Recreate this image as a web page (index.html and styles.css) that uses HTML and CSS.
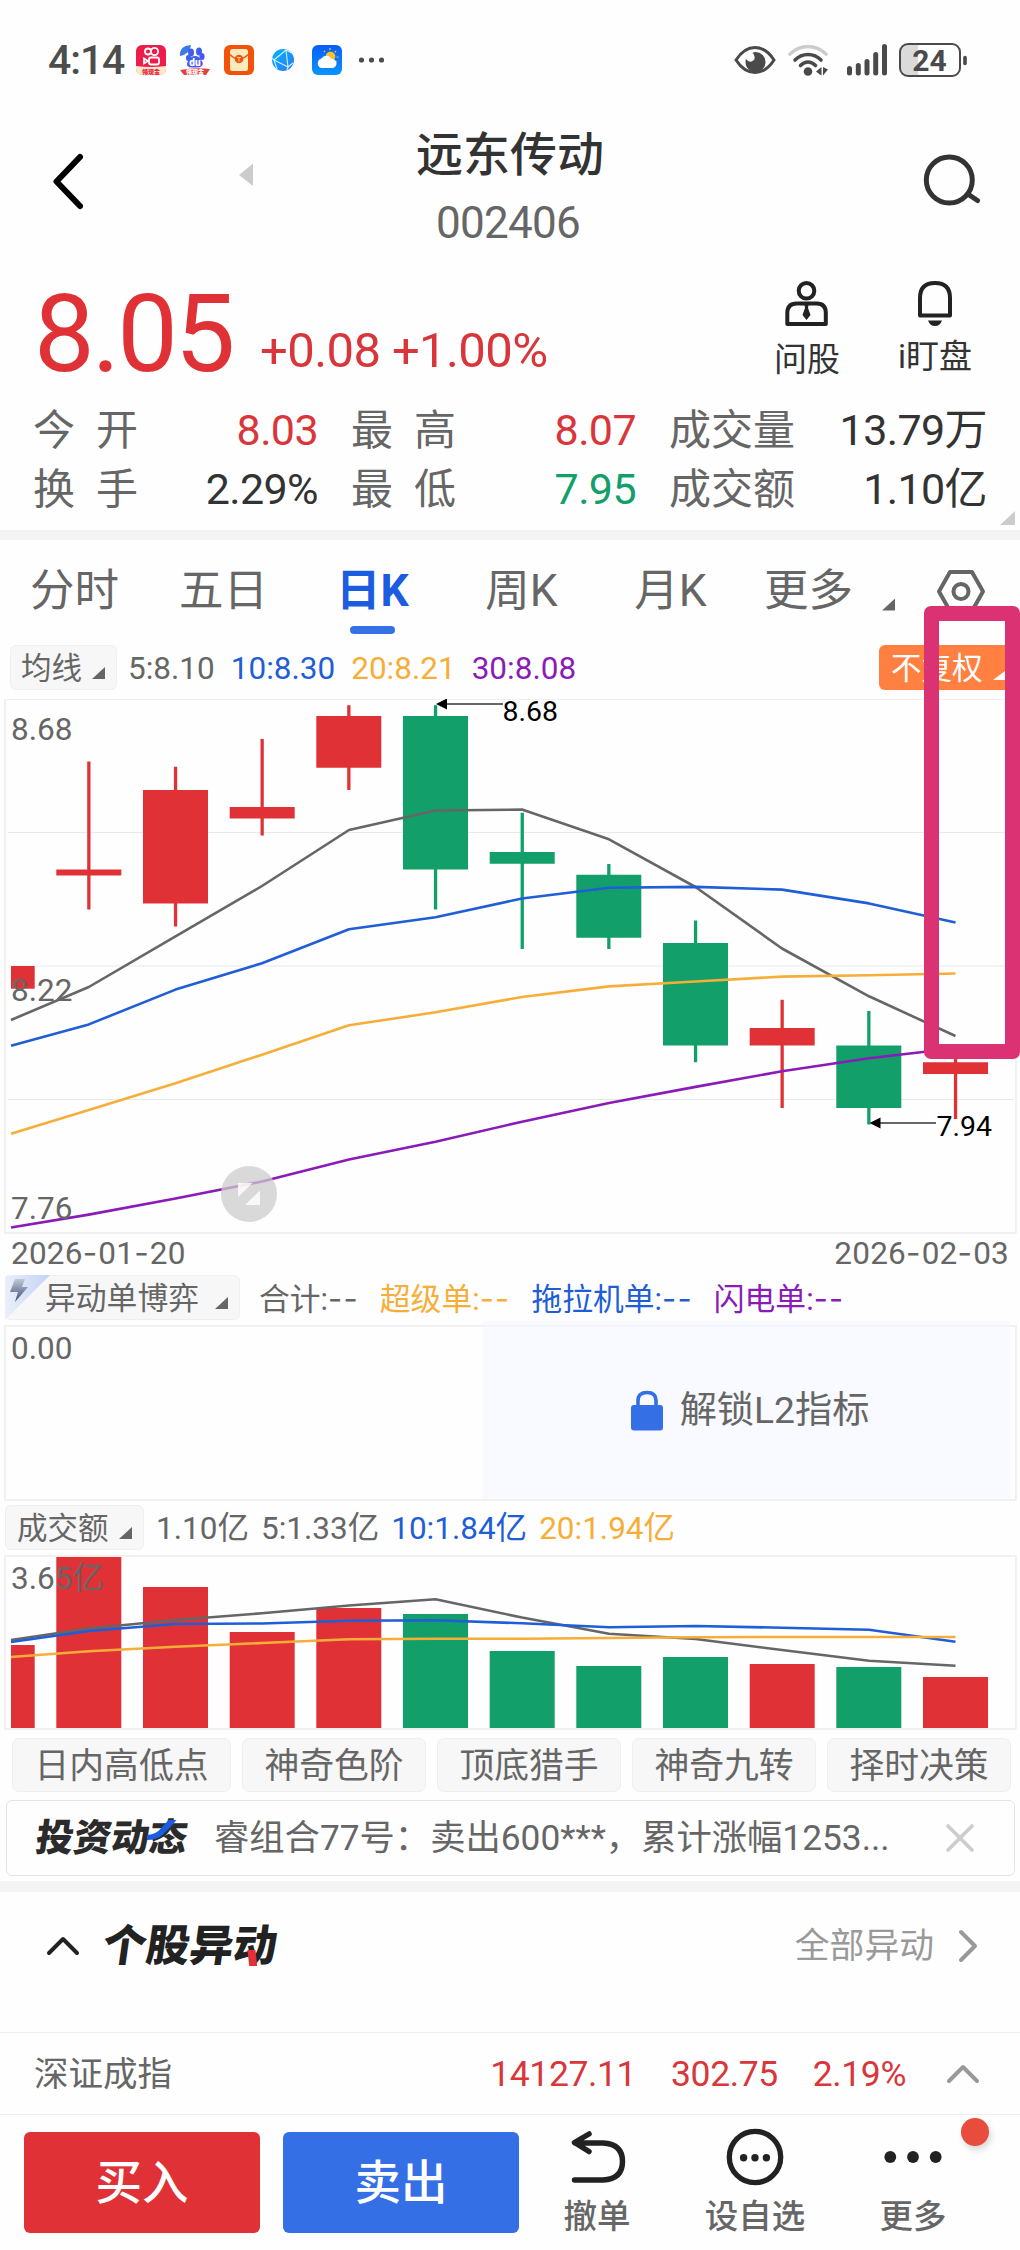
FILE: index.html
```
<!DOCTYPE html>
<html lang="zh-CN">
  <head>
    <meta charset="utf-8">
    <title>远东传动 002406</title>
    <link rel="stylesheet" href="styles.css">
  </head>
  <body>
    <div class="status">
      <span class="clock">4:14</span>
      <svg class="apps" width="260" height="34" viewBox="130 43 260 34">
        <defs>
          <linearGradient id="sky" x1="0" y1="0" x2="0" y2="1"><stop offset="0" stop-color="#0a5df5"/><stop offset="1" stop-color="#0a95ff"/></linearGradient>
          <linearGradient id="globe" x1="0" y1="0" x2="1" y2="1"><stop offset="0" stop-color="#00b4fa"/><stop offset="1" stop-color="#2f7af5"/></linearGradient>
          <linearGradient id="paw" x1="0" y1="0" x2="1" y2="1"><stop offset="0" stop-color="#2a6cf0"/><stop offset="1" stop-color="#5a4bf0"/></linearGradient>
        </defs>
        <!-- video app -->
        <rect x="136" y="45" width="30" height="30" rx="6" fill="#ee1c4b"/>
        <path d="M136 66q15 2 30 0v3q0 6-6 6h-18q-6 0-6-6z" fill="#fde9c8"/>
        <g fill="none" stroke="#fff" stroke-width="1.8"><circle cx="148" cy="51.5" r="3"/><circle cx="154.500" cy="51.500" r="3.600"/><rect x="149" y="57.500" width="10" height="7" rx="2"/><path d="M144 58.500l4 2.500-4 2.500z"/></g>
        <text x="151" y="74" class="app-tag" fill="#e8203c">领现金</text>
        <!-- search app -->
        <path d="M180 56q-1-10 11-11q-1 9-11 11z" fill="#3c78e8"/>
        <g fill="url(#paw)"><ellipse cx="191" cy="52.500" rx="3" ry="4"/><ellipse cx="199" cy="51.500" rx="3" ry="4"/><ellipse cx="188.500" cy="58" rx="2.600" ry="3"/><ellipse cx="202" cy="56.500" rx="2.600" ry="3.500"/><path d="M195 56q4 0 6 4q3 3 1 6q-2 2-7 1.500q-6 .5-7.500-1.500q-1.500-3 1.500-6q2-4 6-4z"/></g>
        <text x="195" y="66" class="app-du">du</text>
        <path d="M180 70q15-3 30-1l-4 6h-22z" fill="#e0413f"/>
        <text x="195" y="74" class="app-tag" fill="#fff">领现金</text>
        <!-- red packet app -->
        <rect x="224" y="45" width="30" height="30" rx="6" fill="#f4510b"/>
        <rect x="230" y="49" width="18" height="22" rx="2.500" fill="#fdeabc"/>
        <path d="M230 54.500q4 4.500 9 4.500t9-4.500" fill="none" stroke="#f4510b" stroke-width="1.300"/>
        <circle cx="239" cy="59" r="4.300" fill="#e8561a"/><path d="M237 57.500h4M239 57.500v4" stroke="#fdd06a"/>
        <!-- browser -->
        <circle cx="283" cy="60" r="11" fill="url(#globe)"/>
        <path d="M286 50L274 60l14 7zM272 58l2 2 3 9M286 50l6 3M288 67l5-4M288 67l-1 3" fill="none" stroke="#cdf3ff" stroke-width="1.100"/>
        <!-- weather -->
        <rect x="312" y="45" width="30" height="30" rx="6" fill="url(#sky)"/>
        <circle cx="330.500" cy="56.500" r="4.800" fill="#fdc02f"/>
        <path d="M324 51l1 1M330 48v2M336 51l-1.300 1.300M338.500 57h-2M336.500 62l-1-1" stroke="#fdc02f" stroke-width="1.200"/>
        <path d="M321 68a5 5 0 0 1 .5-9.500a5.600 5.600 0 0 1 10 .5a4.500 4.500 0 0 1 1 9z" fill="#fff"/>
        <g fill="#4d4d4d"><circle cx="361.500" cy="60" r="2.600"/><circle cx="371.500" cy="60" r="2.600"/><circle cx="381.500" cy="60" r="2.600"/></g>
      </svg>
      <svg class="signals" width="240" height="36" viewBox="731 41 240 36">
        <path d="M736 59q8-12.500 19-12.500t19 12.500q-8 12.500-19 12.500t-19-12.500z" fill="none" stroke="#4a4a4a" stroke-width="3"/>
        <path d="M755 51a10 10 0 1 1-9 7q3 4 6.500 2t1.500-6q-.5-2-2-2z" fill="#4a4a4a"/>
        <g fill="none" stroke-width="3.600" stroke-linecap="round">
          <path d="M790 53q8-7.500 18-7.500t18 7.500" stroke="#ccc"/>
          <path d="M795 59q5.500-5.500 13-5.500t13 5.500M800.500 64.500q3.500-3.500 7.500-3.500t7.500 3.500" stroke="#4a4a4a"/>
        </g>
        <circle cx="808" cy="70.500" r="4.300" fill="#4a4a4a"/>
        <path d="M821.500 66v8.500q-.5 0-5.500-4zM823 66v8.500l5-6z" fill="#4a4a4a"/>
        <path d="M849.500 67.500v4.500M858.300 64.500v7.500M867 60.500v11.500M875.700 53.500v18.500M884.500 45.500v26.500" stroke="#4a4a4a" stroke-width="5" stroke-linecap="round"/>
        <path d="M908 43h10v32h-10q-7-1-7-8v-16q0-7 7-8z" fill="#dadada"/>
        <rect x="900" y="43" width="60" height="32" rx="8" fill="none" stroke="#4a4a4a" stroke-width="2"/>
        <path d="M965 56.500v6" stroke="#4a4a4a" stroke-width="3.600" stroke-linecap="round"/>
        <text x="929.500" y="70.300" class="battery">24</text>
      </svg>
    </div>

    <div class="header">
      <svg width="260" height="140" viewBox="0 120 260 140">
        <path d="M80 157L56.500 181.500L80 206" fill="none" stroke="#000" stroke-width="6" stroke-linecap="round" stroke-linejoin="round"/>
        <path d="M239 175l14-11.500v22.500z" fill="#ccc"/>
      </svg>
      <div class="title">
        <h1>远东传动</h1>
        <p>002406</p>
      </div>
      <svg width="260" height="140" viewBox="760 120 260 140">
        <circle cx="949.300" cy="180" r="23" fill="none" stroke="#333" stroke-width="5"/>
        <path d="M968.500 194.500l9 6" stroke="#333" stroke-width="5" stroke-linecap="round"/>
      </svg>
    </div>

    <div class="quote">
      <span class="price">8.05</span>
      <span class="change">+0.08 +1.00%</span>
      <div class="tool">
        <svg width="46" height="48" viewBox="782 280 46 48" fill="none" stroke="#222" stroke-width="4">
          <circle cx="804.500" cy="290.800" r="7.800"/>
          <path d="M785.300 324v-11q0-9.500 9.500-9.500h20q9 0 9 9.500v11z" stroke-linejoin="round"/>
          <path d="M802.500 305h4l-.5 3 2.500 7-4 5-4-5 2.500-7z" fill="#222" stroke="none"/>
        </svg>
        <span>问股</span>
      </div>
      <div class="tool tool-watch">
        <svg width="38" height="48" viewBox="914 280 38 48" fill="none" stroke="#222" stroke-width="4">
          <path d="M918 315.500v-17.500q0-15 15-15t15 15v17.500z" stroke-linejoin="round"/>
          <path d="M926 320.500h14q-2 5.500-7 5.500t-7-5.500z" fill="#222" stroke="none"/>
        </svg>
        <span>i盯盘</span>
      </div>
    </div>

    <div class="stats">
      <div class="label"><span>今</span><span>开</span></div><b class="up">8.03</b>
      <div class="label mid"><span>最</span><span>高</span></div><b class="up">8.07</b>
      <div class="label mid">成交量</div><b>13.79万</b>
      <div class="label"><span>换</span><span>手</span></div><b>2.29%</b>
      <div class="label mid"><span>最</span><span>低</span></div><b class="down">7.95</b>
      <div class="label mid">成交额</div><b>1.10亿</b>
      <i class="corner"></i>
    </div>
    <div class="band"></div>

    <div class="tabs">
      <span>分时</span>
      <span>五日</span>
      <span class="active">日K</span>
      <span>周K</span>
      <span>月K</span>
      <span class="more">更多<i class="tri"></i></span>
      <svg width="50" height="48" viewBox="936 566 50 48" fill="none" stroke="#666" stroke-width="4" stroke-linejoin="round">
        <path d="M950 571h22l11 19.500l-11 19.500h-22l-11-19.500z"/><circle cx="961" cy="590.500" r="7.500"/>
      </svg>
    </div>

    <div class="legend legend-ma">
      <span class="pill">均线<i class="tri"></i></span>
      <span>5:8.10</span>
      <span class="blue">10:8.30</span>
      <span class="orange">20:8.21</span>
      <span class="purple">30:8.08</span>
      <span class="adjust">不复权<i class="tri"></i></span>
    </div>

    <svg class="chart" width="1020" height="536" viewBox="0 699 1020 536">
      <path d="M4 699.500h1013" stroke="#f0f0f0"/>
      <path d="M5 699v534h1011v-534" fill="none" stroke="#f1f1f1" stroke-width="2"/>
      <path d="M8 832.500h1005M8 966h1005M8 1099.500h1005" stroke="#e9e9e9"/>
      <g fill="#e03236" stroke="none">
        <path d="M11 966h23.700v22.700h-23.700z"/>
        <path d="M87.200 761.400h3.300v148.200h-3.300zM56.300 869.500h65v6h-65z"/>
        <path d="M173.900 766.800h3.300v159.800h-3.300zM143 790h65v113.400h-65z"/>
        <path d="M260.500 739h3.300v96.500h-3.300zM229.700 807h65v11.600h-65z"/>
        <path d="M347.200 705.200h3.300v84.800h-3.300zM316.300 716h65v51.700h-65z"/>
        <path d="M780.500 999.800h3.300v108.100h-3.300zM749.700 1028h65v17.400h-65z"/>
        <path d="M953.900 1050h3.300v69h-3.300zM923 1062.300h65v11.700h-65z"/>
      </g>
      <g fill="#139f6a" stroke="none">
        <path d="M433.900 705.200h3.300v204.400h-3.300zM403 716h65v153.500h-65z"/>
        <path d="M520.600 812.800h3.300v136.200h-3.300zM489.700 852h65v11.700h-65z"/>
        <path d="M607.200 864h3.300v85h-3.300zM576.300 874.800h65v63h-65z"/>
        <path d="M693.900 920.400h3.300v141.900h-3.300zM663 943h65v102.400h-65z"/>
        <path d="M867.200 1011h3.300v113.400h-3.300zM836.300 1045.400h65v62.500h-65z"/>
      </g>
      <g class="lines">
        <polyline stroke="#666" points="11,1020 88.800,987 175.500,936.400 262,886 349,830 435.500,810.500 522,809.600 609,839.300 695.500,887 782,948.500 869,996.300 955.500,1036"/>
        <polyline stroke="#1f5ed6" points="11,1045.800 88.800,1024.400 175.500,989.600 262,963.200 349,929.300 435.500,917.200 522,898.500 609,887.800 695.500,886.900 782,889.600 869,903.400 955.500,922.600"/>
        <polyline stroke="#f7ae38" points="11,1133.800 88.800,1110 175.500,1083.300 262,1054.700 349,1025.300 435.500,1012.300 522,997 609,986.400 695.500,981.500 782,976.600 869,975.300 955.500,973.500"/>
        <polyline stroke="#8a1bb8" points="11,1227.500 88.800,1214.600 175.500,1198.500 262,1181.500 349,1159.600 435.500,1141.800 522,1121.700 609,1103 695.500,1086.900 782,1071.300 869,1058.300 940,1050"/>
      </g>
      <g class="scale"><text x="11" y="739.500">8.68</text><text x="11" y="1001">8.22</text><text x="11" y="1218.500">7.76</text></g>
      <path d="M440 704h63M873 1123h63" stroke="#666" stroke-width="2"/>
      <path d="M436 704l11-5.500v11zM869.500 1123l11-5.500v11z"/>
      <g class="mark"><text x="502.500" y="720.800">8.68</text><text x="936.500" y="1135.500">7.94</text></g>
      <circle cx="249" cy="1194" r="28" fill="#ccc" fill-opacity=".75"/>
      <path d="M238 1183h14.500l-14.500 14zM260 1190.500v14.500h-15z" fill="#fff" fill-opacity=".8"/>
    </svg>
    <div class="dates">
      <span>2026<i class="dash">-</i>01<i class="dash">-</i>20</span>
      <span>2026<i class="dash">-</i>02<i class="dash">-</i>03</span>
    </div>

    <div class="legend legend-l2">
      <span class="pill">
        <svg class="flash" width="45" height="45" viewBox="0 0 45 45">
          <defs>
            <linearGradient id="fold" x1="0" y1="0" x2="1" y2="0"><stop offset="0" stop-color="#eaeffa"/><stop offset="1" stop-color="#c3d2f5"/></linearGradient>
            <linearGradient id="bolt" x1="0" y1="0" x2="0" y2="1"><stop offset="0" stop-color="#c0c8d8"/><stop offset="1" stop-color="#3d4d72"/></linearGradient>
          </defs>
          <path d="M0 45v-41q0-4 4-4h41z" fill="url(#fold)"/>
          <path d="M10 4h10l-3 8h6l-13 15l3-10h-8z" fill="url(#bolt)"/>
        </svg>
        异动单博弈<i class="tri"></i>
      </span>
      <span>合计:<i class="dash">--</i></span>
      <span class="orange">超级单:<i class="dash">--</i></span>
      <span class="blue">拖拉机单:<i class="dash">--</i></span>
      <span class="purple">闪电单:<i class="dash">--</i></span>
    </div>
    <div class="panel">
      <span class="zero">0.00</span>
      <div class="unlock">
        <svg width="32" height="41" viewBox="0 0 32 41"><path d="M7 17v-6.500q0-8 9-8t9 8v6.500" fill="none" stroke="#346fe5" stroke-width="3.600"/><rect y="15" width="32" height="25.500" rx="3" fill="#346fe5"/></svg>
        <span>解锁L2指标</span>
      </div>
    </div>

    <div class="legend legend-vol">
      <span class="pill">成交额<i class="tri"></i></span>
      <span>1.10亿</span>
      <span>5:1.33亿</span>
      <span class="blue">10:1.84亿</span>
      <span class="orange">20:1.94亿</span>
    </div>
    <svg class="chart" width="1020" height="176" viewBox="0 1555 1020 176">
      <rect x="5" y="1556" width="1011" height="173" fill="none" stroke="#f1f1f1" stroke-width="2"/>
      <path fill="#e03236" d="M11 1645h23.700v83h-23.700zM56.300 1557h65v171h-65zM143 1587h65v141h-65zM229.700 1632h65v96h-65zM316.300 1608h65v120h-65zM749.700 1664h65v64h-65zM923 1677h65v51h-65z"/>
      <path fill="#139f6a" d="M403 1614h65v114h-65zM489.700 1651h65v77h-65zM576.300 1666h65v62h-65zM663 1657h65v71h-65zM836.300 1667h65v61h-65z"/>
      <g class="lines">
        <polyline stroke="#666" points="11,1640 88.800,1628.500 175.500,1620 262,1613.300 349,1605.500 435.500,1599.300 522,1617.500 609,1633.700 695.500,1639 782,1650 869,1660.700 955.500,1665.700"/>
        <polyline stroke="#1f5ed6" points="11,1642 88.800,1631 175.500,1624 262,1623.500 349,1620.700 435.500,1620.300 522,1623.300 609,1627.300 695.500,1626 782,1627.700 869,1629.700 955.500,1641.700"/>
        <polyline stroke="#f7ae38" points="11,1657 88.800,1651.300 175.500,1646.700 262,1643 349,1639.300 435.500,1638.700 522,1638.700 609,1638 695.500,1637.300 782,1637 869,1637 955.500,1637"/>
      </g>
      <text class="scale" x="11" y="1589">3.65亿</text>
    </svg>

    <div class="chips">
      <span>日内高低点</span>
      <span>神奇色阶</span>
      <span>顶底猎手</span>
      <span>神奇九转</span>
      <span>择时决策</span>
    </div>

    <div class="news">
      <span class="brand">投资动态<svg class="swoosh" width="28" height="24" viewBox="0 0 28 24"><path d="M19 1h8q-6 9-12 15q-5 5-15 5v-5q9-1 12-6z" fill="#1b5ce0"/></svg></span>
      <span class="text">睿组合77号：卖出600***，累计涨幅1253...</span>
      <svg width="32" height="32" viewBox="0 0 32 32"><path d="M4 4l24 24M28 4l-24 24" stroke="#ccc" stroke-width="3.600" stroke-linecap="round"/></svg>
    </div>
    <div class="band band-low"></div>

    <div class="moves">
      <svg width="36" height="24" viewBox="0 0 36 24"><path d="M4 19l14-14l14 14" fill="none" stroke="#222" stroke-width="4" stroke-linecap="round" stroke-linejoin="round"/></svg>
      <span class="brand">个股异动<i class="tick"></i></span>
      <span class="all">全部异动</span>
      <svg width="24" height="36" viewBox="0 0 24 36"><path d="M5 4l14 14l-14 14" fill="none" stroke="#999" stroke-width="4" stroke-linecap="round" stroke-linejoin="round"/></svg>
    </div>

    <div class="index">
      <span class="name">深证成指</span>
      <span class="up">14127.11</span>
      <span class="up">302.75</span>
      <span class="up">2.19%</span>
      <svg width="36" height="24" viewBox="0 0 36 24"><path d="M4 19l14-14l14 14" fill="none" stroke="#999" stroke-width="4" stroke-linecap="round" stroke-linejoin="round"/></svg>
    </div>

    <div class="actions">
      <button class="buy">买入</button>
      <button class="sell">卖出</button>
      <div class="action">
        <svg width="60" height="60" viewBox="567 2127 60 60" fill="none" stroke="#222" stroke-width="5.500" stroke-linecap="round" stroke-linejoin="round">
          <path d="M589 2134l-14.500 8.500l14.500 9M575 2143h28q19.500 1 19.500 18.500t-19.500 18.500h-28.500"/>
        </svg>
        <span>撤单</span>
      </div>
      <div class="action">
        <svg width="60" height="60" viewBox="725 2127 60 60">
          <circle cx="755" cy="2157" r="25.700" fill="none" stroke="#222" stroke-width="5.300"/>
          <g fill="#222"><circle cx="743.600" cy="2157.700" r="3.700"/><circle cx="755" cy="2157.700" r="3.700"/><circle cx="766.400" cy="2157.700" r="3.700"/></g>
        </svg>
        <span>设自选</span>
      </div>
      <div class="action">
        <svg width="60" height="60" viewBox="883 2127 60 60" fill="#222"><circle cx="890.300" cy="2157" r="5.900"/><circle cx="913" cy="2157" r="5.900"/><circle cx="935.700" cy="2157" r="5.900"/></svg>
        <span>更多</span>
        <i class="dot"></i>
      </div>
    </div>

    <div class="highlight"></div>
  </body>
</html>
```
FILE: styles.css
```
* {
  box-sizing: border-box;
}
body {
  margin: 0;
  position: relative;
  width: 1020px;
  height: 2250px;
  overflow: hidden;
  background-color: #fefefe;
  color: #666;
  font-family: Roboto, "Noto Sans CJK SC", sans-serif;
  white-space: nowrap;
}
svg {
  display: block;
  flex: none;
}
i {
  font-style: normal;
}
.up {
  color: #d8363a;
}
.down {
  color: #139f6a;
}
.blue {
  color: #1f5ed6;
}
.orange {
  color: #f7ae38;
}
.purple {
  color: #8a1bb8;
}
.band {
  height: 10px;
  background-color: #f4f4f4;
}
.tri {
  width: 13px;
  height: 12px;
  background-color: #666;
  clip-path: polygon(100% 0, 100% 100%, 0 100%);
}

/* status bar */
.status {
  display: flex;
  align-items: center;
  height: 120px;
  padding: 0 49px 0 48px;
}
.clock {
  width: 82px;
  font-size: 41px;
  font-weight: 500;
  letter-spacing: -1.1px;
  color: #4d4d4d;
}
.signals {
  margin-left: auto;
}
.app-tag {
  font-size: 6px;
  font-weight: 900;
  text-anchor: middle;
}
.app-du {
  font-size: 10px;
  font-weight: 900;
  fill: #fff;
  text-anchor: middle;
}
.battery {
  font-size: 30px;
  font-weight: 700;
  fill: #4a4a4a;
  text-anchor: middle;
}

/* header */
.header {
  display: flex;
  justify-content: space-between;
  height: 140px;
}
.title {
  text-align: center;
}
.title h1 {
  margin: 0;
  font-size: 47px;
  line-height: 69px;
  font-weight: 500;
  color: #333;
}
.title p {
  margin: 0;
  padding-right: 4px;
  font-size: 44px;
  line-height: 68px;
  letter-spacing: -0.7px;
}

/* quote */
.quote {
  display: flex;
  align-items: baseline;
  height: 141px;
  padding: 24px 48px 0 34px;
}
.price {
  width: 226px;
  font-size: 108px;
  line-height: 100px;
  letter-spacing: -3px;
  color: #e03236;
}
.change {
  position: relative;
  top: -4px;
  font-size: 49px;
  line-height: 60px;
  letter-spacing: -0.6px;
  color: #d8363a;
}
.tool {
  display: flex;
  flex-direction: column;
  align-items: center;
  align-self: flex-start;
  margin-top: -4px;
  margin-left: auto;
  font-size: 33px;
  line-height: 48px;
  color: #333;
}
.tool span {
  margin-top: 8px;
}
.tool-watch {
  margin-left: 58px;
}
.tool-watch span {
  margin-top: 5px;
}

.stats {
  position: relative;
  display: grid;
  grid-template-columns: 105px 180px 138px 180px 159px 192px;
  grid-auto-rows: 59px;
  height: 129px;
  padding-left: 33px;
  font-size: 42px;
  line-height: 59px;
}
.stats .label {
  display: flex;
  justify-content: space-between;
}
.stats .mid {
  padding-left: 33px;
}
.stats b {
  text-align: right;
  font-weight: 400;
  font-size: 43px;
  letter-spacing: -0.6px;
  color: #333;
}
.stats b.up {
  color: #d8363a;
}
.stats b.down {
  color: #139f6a;
}
.corner {
  position: absolute;
  right: 5px;
  bottom: 5px;
  width: 15px;
  height: 14px;
  background-color: #ccc;
  clip-path: polygon(100% 0, 100% 100%, 0 100%);
}

/* tabs */
.tabs {
  display: grid;
  grid-template-columns: repeat(5, 149px) 191px 50px;
  align-items: center;
  height: 100px;
  text-align: center;
  font-size: 44.5px;
  line-height: 102px;
}
.tabs .active {
  position: relative;
  font-weight: 700;
  color: #1b5ce0;
}
.tabs .active::after {
  content: "";
  position: absolute;
  left: 52px;
  bottom: 8px;
  width: 45px;
  height: 8px;
  border-radius: 4px;
  background-color: #3570e6;
}
.tabs .more {
  display: flex;
  align-items: center;
  padding-left: 19px;
}
.tabs .more .tri {
  margin: 27px 0 0 29px;
}

/* indicator legends */
.legend {
  display: flex;
  align-items: center;
  height: 45px;
  font-size: 31.5px;
  line-height: 45px;
}
.legend > span {
  padding-top: 2px;
}
.legend .pill,
.adjust {
  position: relative;
  display: flex;
  align-items: center;
  height: 45px;
  border: 1px solid #efefef;
  border-radius: 6px;
  background-color: #f7f7f7;
  font-size: 30.5px;
}
.pill .tri,
.adjust .tri {
  position: absolute;
  right: 11px;
  bottom: 10px;
}
.legend-ma {
  gap: 16px;
  margin: 5px 7px 9px 10px;
}
.legend-ma .pill {
  width: 107px;
  margin-right: -5px;
  padding-left: 10px;
}
.legend-ma .adjust {
  width: 134px;
  margin-left: auto;
  padding-left: 12px;
  border: 0;
  background-color: #ff8040;
  color: #fff;
}
.adjust .tri {
  right: 4px;
  width: 16px;
  background-color: #fff;
}
.legend-l2 {
  padding-left: 5px;
  font-size: 30.8px;
}
.legend-l2 .pill {
  width: 235px;
  margin-right: 19px;
  padding-left: 39px;
  font-size: 30.8px;
}
.legend-l2 > span + span {
  margin-right: 21px;
}
.flash {
  position: absolute;
  left: -1px;
  top: -1px;
}
.dash {
  font-family: Inter, sans-serif;
  letter-spacing: 1.2px;
}
.legend-vol {
  gap: 12px;
  margin: 4px 0 5px 5px;
}
.legend-vol .pill {
  width: 139px;
  padding-left: 11px;
}

/* charts */
.lines {
  fill: none;
  stroke-width: 2.6;
  stroke-linejoin: round;
}
.scale {
  font-size: 31.5px;
  fill: #666;
}
.mark {
  font-size: 28.5px;
  fill: #000;
}
.dates {
  display: flex;
  justify-content: space-between;
  height: 40px;
  padding: 0 11px 0 11px;
  font-size: 31.5px;
  line-height: 36px;
  letter-spacing: 0.2px;
}
.panel {
  position: relative;
  height: 176px;
  margin: 5px 3px 0 4px;
  border: 2px solid #f1f1f1;
}
.zero {
  display: block;
  padding: 2px 0 0 5px;
  font-size: 31.5px;
  line-height: 40px;
}
.unlock {
  position: absolute;
  left: 477px;
  top: -6px;
  display: flex;
  align-items: center;
  justify-content: center;
  gap: 17px;
  width: 527px;
  height: 178px;
  padding-left: 7px;
  background-color: rgba(243, 246, 255, 0.6);
  font-size: 37.2px;
  line-height: 54px;
}

/* strategy chips */
.chips {
  display: flex;
  justify-content: space-between;
  margin-top: 7px;
  padding: 0 9px 0 12px;
  font-size: 34.8px;
}
.chips span {
  width: 184px;
  height: 54px;
  border: 1px solid #efefef;
  border-radius: 7px;
  background-color: #f7f7f7;
  text-align: center;
  line-height: 54px;
}
.chips span:first-child {
  width: 219px;
}

.news {
  display: flex;
  align-items: center;
  height: 76px;
  margin: 8px 5px 5px 6px;
  padding: 0 38px 0 29px;
  border: 1px solid #e4e4e4;
  border-radius: 6px;
}
.brand {
  position: relative;
  line-height: 56px;
  font-weight: 900;
  color: #2b2b2b;
}
.news .brand {
  width: 178px;
  font-size: 37.8px;
  transform: skewX(-8deg);
}
.swoosh {
  position: absolute;
  left: 111px;
  top: 9px;
}
.news .text {
  flex: 1;
  font-size: 35.3px;
  line-height: 54px;
}
.band-low {
  height: 11px;
}

.moves {
  display: flex;
  align-items: center;
  height: 140px;
  padding: 0 40px 33px 45px;
}
.moves .brand {
  margin-left: 22px;
  padding-top: 2px;
  font-size: 43.5px;
  color: #222;
  transform: skewX(-8deg);
}
.tick {
  position: absolute;
  left: 147px;
  bottom: 9px;
  width: 8px;
  height: 16px;
  background-color: #e03236;
  transform: skewX(14deg);
}
.all {
  margin: 0 22px 0 auto;
  font-size: 34.8px;
  line-height: 54px;
  color: #999;
}

.index {
  display: flex;
  align-items: center;
  height: 83px;
  padding: 0 39px 0 34px;
  border-top: 1px solid #eee;
  border-bottom: 1px solid #eee;
  font-size: 35.5px;
  line-height: 54px;
  letter-spacing: -0.4px;
}
.index .name {
  margin-right: auto;
  font-size: 34.5px;
  letter-spacing: 0;
}
.index .up {
  margin-left: 35px;
}
.index svg {
  margin-left: 39px;
}

/* bottom bar */
.actions {
  display: flex;
  height: 135px;
  padding: 17px 0 0 24px;
}
.actions button {
  width: 236px;
  height: 101px;
  margin: 0 23px 0 0;
  padding: 2px 0 0 0;
  border: 0;
  border-radius: 6px;
  font-family: inherit;
  font-size: 46.5px;
  line-height: 99px;
  font-weight: 500;
  color: #fff;
}
.buy {
  background-color: #e03236;
}
.sell {
  background-color: #346fe5;
}
.action {
  position: relative;
  display: flex;
  flex-direction: column;
  align-items: center;
  width: 158px;
  margin-top: -5px;
  font-size: 33.5px;
  line-height: 48px;
  font-weight: 500;
}
.action span {
  margin-top: 6px;
}
.sell + .action {
  margin-left: -24px;
}
.dot {
  position: absolute;
  left: 127px;
  top: -9px;
  width: 28px;
  height: 28px;
  border-radius: 50%;
  background-color: #e74c3c;
  box-shadow: 2px 4px 6px rgba(0, 0, 0, 0.15);
}

/* marker drawn over the last candle */
.highlight {
  position: absolute;
  left: 924px;
  top: 606px;
  width: 96px;
  height: 453px;
  border: 15px solid #db3273;
  border-radius: 7px;
}
```
